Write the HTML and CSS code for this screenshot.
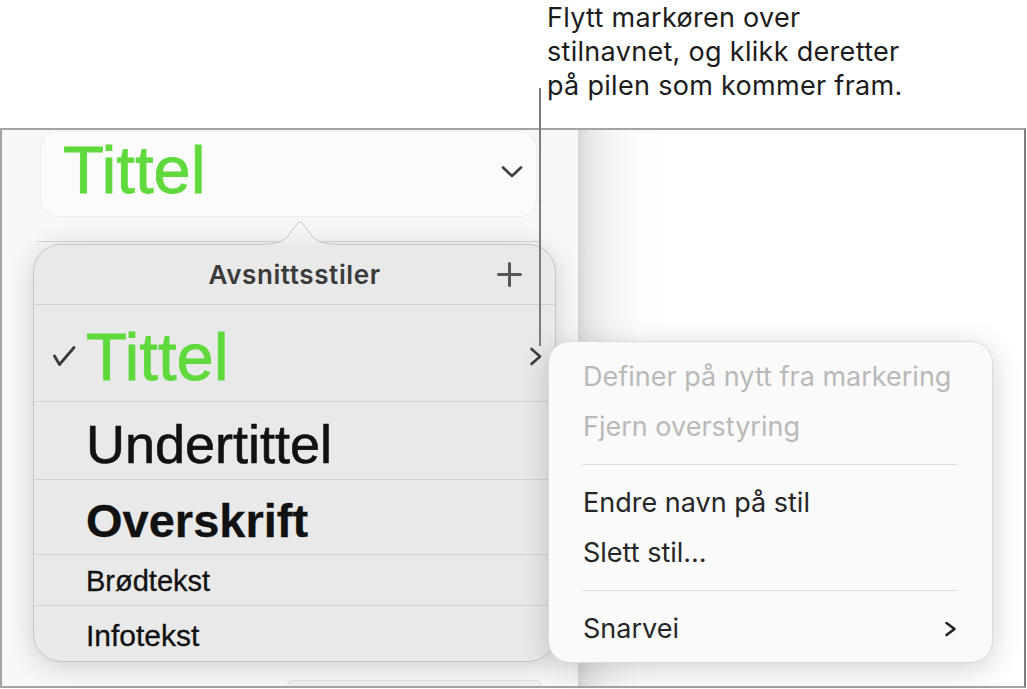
FILE: index.html
```html
<!DOCTYPE html>
<html lang="nb">
<head>
    <meta charset="UTF-8">
    <meta name="viewport" content="width=device-width, initial-scale=1.0">
    <title>Avsnittsstiler</title>
    <link rel="stylesheet" href="styles.css">
</head>
<body>
    <div class="callout">
        <p class="callout-text">Flytt markøren over<br>stilnavnet, og klikk deretter<br>på pilen som kommer fram.</p>
    </div>
    <div class="callout-line"></div>

    <div class="frame">
        <aside class="sidebar">
            <div class="style-button">
                <span class="style-button-name">Tittel</span>
                <svg class="chevron-down" width="22" height="14" viewBox="0 0 22 14">
                    <path d="M2 2.5 L11 11 L20 2.5" fill="none" stroke="#3f3f3f" stroke-width="2.6" stroke-linecap="round" stroke-linejoin="round"/>
                </svg>
            </div>
            <div class="sidebar-rule"></div>
            <div class="sidebar-stub"></div>
        </aside>
        <main class="canvas"></main>

        <!-- styles popover -->
        <div class="popover">
            <svg class="popover-arrow" width="70" height="28" viewBox="0 0 70 28">
                <defs>
                    <linearGradient id="arrowFill" x1="0" y1="0" x2="0" y2="1">
                        <stop offset="0" stop-color="#f7f7f7"/>
                        <stop offset="1" stop-color="#ededed"/>
                    </linearGradient>
                </defs>
                <path d="M0 28 L0 27 C12 27 17 25.5 23 19 L32 7 Q35 3 38 7 L47 19 C53 25.5 58 27 70 27 L70 28 Z" fill="url(#arrowFill)"/>
                <path d="M0 27 C12 27 17 25.5 23 19 L32 7 Q35 3 38 7 L47 19 C53 25.5 58 27 70 27" fill="none" stroke="#c4c4c4" stroke-width="1"/>
            </svg>
            <div class="popover-header">
                <span></span>
                <span class="popover-title">Avsnittsstiler</span>
                <svg class="plus" width="25" height="25" viewBox="0 0 25 25">
                    <path d="M12.5 1.5 V23.5 M1.5 12.5 H23.5" fill="none" stroke="#565656" stroke-width="3" stroke-linecap="round"/>
                </svg>
            </div>
            <div class="style-row row-title">
                <span class="check-cell">
                    <svg class="check" width="24" height="22" viewBox="0 0 24 22">
                        <path d="M2.5 11 L7.5 19.5 L22 2.5" fill="none" stroke="#3a3a3a" stroke-width="2.8" stroke-linecap="round" stroke-linejoin="round"/>
                    </svg>
                </span>
                <span class="style-name name-title">Tittel</span>
                <svg class="chevron-right" width="14" height="19" viewBox="0 0 14 19">
                    <path d="M2.5 2 L11 9.5 L2.5 17" fill="none" stroke="#3f3f3f" stroke-width="2.6" stroke-linecap="round" stroke-linejoin="round"/>
                </svg>
            </div>
            <div class="style-row row-subtitle">
                <span class="check-cell"></span>
                <span class="style-name name-subtitle">Undertittel</span>
            </div>
            <div class="style-row row-heading">
                <span class="check-cell"></span>
                <span class="style-name name-heading">Overskrift</span>
            </div>
            <div class="style-row row-body">
                <span class="check-cell"></span>
                <span class="style-name name-body">Brødtekst</span>
            </div>
            <div class="style-row row-caption">
                <span class="check-cell"></span>
                <span class="style-name name-caption">Infotekst</span>
            </div>
        </div>

        <!-- context menu -->
        <div class="menu">
            <div class="menu-item disabled">Definer på nytt fra markering</div>
            <div class="menu-item disabled">Fjern overstyring</div>
            <div class="menu-separator"></div>
            <div class="menu-item">Endre navn på stil</div>
            <div class="menu-item">Slett stil…</div>
            <div class="menu-separator"></div>
            <div class="menu-item">
                <span>Snarvei</span>
                <svg width="13" height="16" viewBox="0 0 13 16">
                    <path d="M2.5 2 L10.5 8 L2.5 14" fill="none" stroke="#222" stroke-width="2.6" stroke-linecap="round" stroke-linejoin="round"/>
                </svg>
            </div>
        </div>
    </div>
</body>
</html>
```

FILE: styles.css
```css
* {
    box-sizing: border-box;
}

body {
    margin: 0;
    width: 1027px;
    height: 689px;
    overflow: hidden;
    background-color: #fff;
    font-family: "Liberation Sans", Arial, sans-serif;
    position: relative;
}

/* annotation */
.callout {
    height: 128px;
    padding: 1px 0 0 547px;
}

.callout-text {
    margin: 0;
    font-family: Inter, "Noto Sans", sans-serif;
    font-size: 27px;
    letter-spacing: 0.3px;
    line-height: 34px;
    color: #1c1c1c;
}

.callout-line {
    position: absolute;
    left: 539px;
    top: 88px;
    width: 2px;
    height: 258px;
    background-color: #7b7b7b;
    z-index: 10;
}

/* screenshot frame */
.frame {
    position: relative;
    display: flex;
    width: 1026px;
    height: 560px;
    border: 2px solid #a3a3a3;
    border-right-color: #7e7e7e;
}

.sidebar {
    display: flex;
    flex-direction: column;
    width: 576px;
    background-color: #f7f7f7;
}

.canvas {
    flex: 1;
    background: linear-gradient(to right, #d6d6d6 0, #e6e6e6 10px, #f4f4f4 30px, #fdfdfd 60px, #fff 90px);
}

.style-button {
    display: flex;
    align-items: flex-start;
    justify-content: space-between;
    width: 497px;
    height: 86px;
    margin: 1px 0 0 38px;
    padding: 4px 13px 0 22px;
    background-color: #fbfbfb;
    border: 1px solid #eeeeee;
    border-radius: 18px;
}

.style-button-name {
    font-size: 67px;
    line-height: 1;
    color: #5fd93c;
    -webkit-text-stroke: 0.8px #5fd93c;
}

.chevron-down {
    margin-top: 29px;
}

.sidebar-rule {
    height: 1px;
    width: 505px;
    margin: 24px 0 0 35px;
    background-color: #d5d5d5;
}

.sidebar-stub {
    margin: auto 0 0 285px;
    width: 255px;
    height: 6px;
    background-color: #f0f0f0;
    border: 1px solid #e2e2e2;
    border-bottom: none;
    border-radius: 7px 7px 0 0;
}

/* popover */
.popover {
    position: absolute;
    left: 31px;
    top: 114px;
    width: 523px;
    height: 418px;
    background-color: #e9e9e9;
    border: 1px solid #c6c6c6;
    border-radius: 28px;
    box-shadow: 0 4px 26px rgba(0, 0, 0, 0.16);
    z-index: 2;
}

.popover-arrow {
    position: absolute;
    left: 231px;
    top: -28px;
}

.popover-header {
    display: grid;
    grid-template-columns: 1fr auto 1fr;
    align-items: center;
    height: 59px;
}

.popover-title {
    font-family: Inter, "Noto Sans", sans-serif;
    font-weight: 600;
    font-size: 26px;
    letter-spacing: 0.6px;
    color: #3b3b3b;
}

.plus {
    justify-self: end;
    margin-right: 33px;
}

.style-row {
    display: flex;
    align-items: flex-start;
    border-top: 1px solid #d2d2d2;
}

.check-cell {
    width: 52px;
    flex-shrink: 0;
}

.check {
    display: block;
    margin: 22px 0 0 18px;
}

.style-name {
    flex: 1;
    line-height: 1;
    color: #111;
    -webkit-text-stroke: 0.3px #111;
}

.row-title {
    height: 97px;
    padding-top: 18px;
}

.name-title {
    font-size: 67px;
    color: #5fd93c;
    -webkit-text-stroke: 0.8px #5fd93c;
}

.chevron-right {
    margin: 24px 12px 0 0;
}

.row-subtitle {
    height: 78px;
    padding-top: 15px;
}

.name-subtitle {
    font-size: 54px;
    -webkit-text-stroke: 0.6px #111;
}

.row-heading {
    height: 75px;
    padding-top: 17px;
}

.name-heading {
    font-size: 47px;
    font-weight: bold;
}

.row-body {
    height: 51px;
    padding-top: 12px;
}

.name-body {
    font-size: 29px;
}

.row-caption {
    height: 56px;
    padding-top: 15px;
}

.name-caption {
    font-size: 30px;
}

/* context menu */
.menu {
    position: absolute;
    left: 546px;
    top: 211px;
    width: 445px;
    height: 322px;
    padding: 10px 35px 0 34px;
    background-color: #fafafa;
    border: 1px solid #dadada;
    border-radius: 22px;
    box-shadow: 0 6px 30px rgba(0, 0, 0, 0.18);
    font-family: Inter, "Noto Sans", sans-serif;
    font-size: 27px;
    z-index: 3;
}

.menu-item {
    display: flex;
    align-items: center;
    justify-content: space-between;
    height: 50px;
    line-height: 50px;
    color: #262626;
}

.menu-item.disabled {
    color: #b9b9b9;
}

.menu-separator {
    height: 1px;
    margin: 12px 0 13px -1px;
    background-color: #dcdcdc;
}
```
